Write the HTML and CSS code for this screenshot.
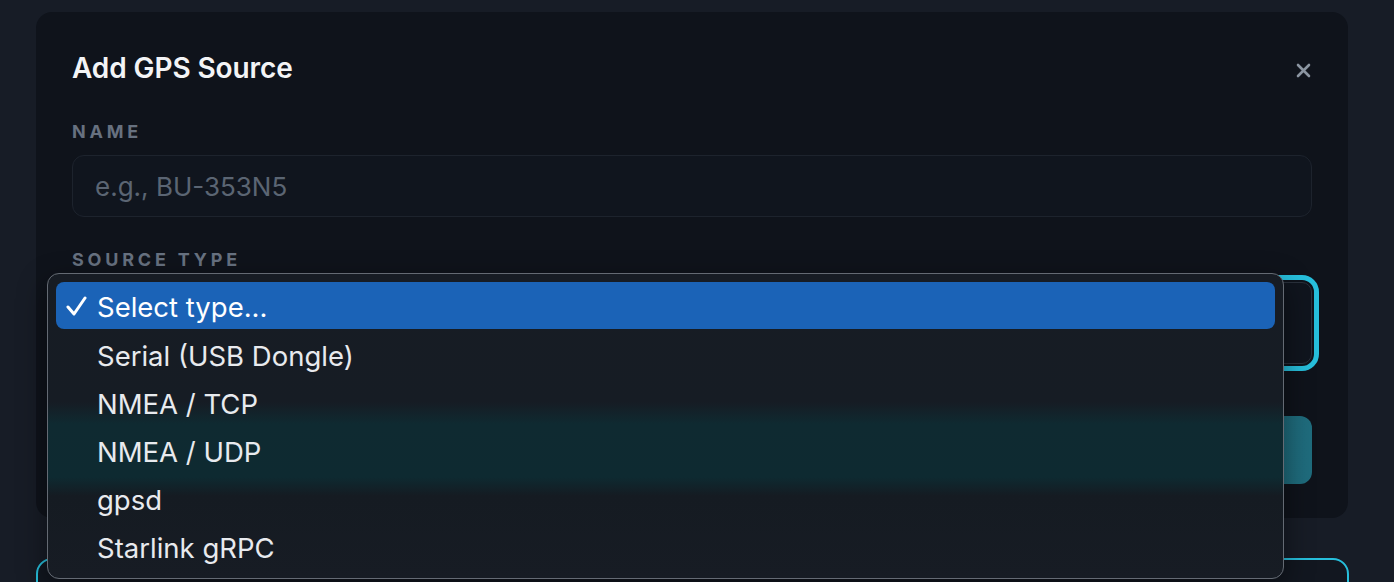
FILE: index.html
```html
<!DOCTYPE html>
<html lang="en">
<head>
  <meta charset="UTF-8">
  <meta name="viewport" content="width=device-width, initial-scale=1.0">
  <title>Add GPS Source</title>
  <link rel="stylesheet" href="styles.css">
</head>
<body>
  <div class="page">
    <div class="modal">
      <div class="modal-head">
        <h2>Add GPS Source</h2>
        <button class="close-btn" aria-label="Close">
          <svg width="15" height="15" viewBox="0 0 15 15">
            <path d="M2 2 L13 13 M13 2 L2 13" stroke="#8b95a1" stroke-width="2.6" stroke-linecap="round" fill="none"/>
          </svg>
        </button>
      </div>

      <label class="field-label" for="name">Name</label>
      <input type="text" id="name" placeholder="e.g., BU-353N5">

      <label class="field-label source-label">Source type</label>
      <div class="select-box"></div>

      <button class="submit-btn" aria-label="Add source"></button>
    </div>

    <div class="next-card"></div>

    <!-- native select popup, open over the form -->
    <ul class="dropdown">
      <li class="option selected">
        <svg class="check" width="21" height="20" viewBox="0 0 21 20">
          <polyline points="2,11 8,18 19,2" stroke="#ffffff" stroke-width="3" fill="none" stroke-linecap="round" stroke-linejoin="round"/>
        </svg>
        Select type...
      </li>
      <li class="option">Serial (USB Dongle)</li>
      <li class="option">NMEA / TCP</li>
      <li class="option">NMEA / UDP</li>
      <li class="option">gpsd</li>
      <li class="option">Starlink gRPC</li>
    </ul>
  </div>
</body>
</html>
```

FILE: styles.css
```css
* {
  box-sizing: border-box;
  margin: 0;
  padding: 0;
  font-family: 'Inter', 'Noto Sans', sans-serif;
}

body {
  background: #171c26;
  height: 582px;
  overflow: hidden;
}

.page {
  position: relative;
  padding: 12px 46px 0 36px;
}

.modal {
  background: #0f131b;
  border-radius: 16px;
  padding: 36px 36px 34px;
}

.modal-head {
  display: flex;
  justify-content: space-between;
  align-items: center;
  height: 40px;
}

h2 {
  font-size: 28px;
  font-weight: 600;
  color: #f3f4f6;
  letter-spacing: -0.1px;
}

.close-btn {
  background: none;
  border: none;
  width: 15px;
  height: 15px;
  display: flex;
  margin-top: 5px;
  margin-right: 1px;
}

.field-label {
  display: block;
  margin-top: 32px;
  margin-bottom: 11px;
  font-size: 18px;
  line-height: 24px;
  font-weight: 700;
  letter-spacing: 3.8px;
  text-transform: uppercase;
  color: #677180;
}

.source-label {
  margin-top: 31px;
  margin-bottom: 10px;
}

input[type="text"] {
  display: block;
  width: 100%;
  height: 62px;
  padding: 0 22px;
  background: #10151e;
  border: 1px solid #1d232d;
  border-radius: 12px;
  font-size: 26px;
  color: #e5e7eb;
  outline: none;
}

input::placeholder {
  color: #5b6573;
}

.select-box {
  height: 82px;
  background: #10151e;
  border: 1px solid #2a313c;
  border-radius: 10px;
  outline: 5px solid #27bfdc;
  outline-offset: 2px;
}

.submit-btn {
  display: block;
  width: 100%;
  height: 68px;
  margin-top: 52px;
  border: none;
  border-radius: 12px;
  background: linear-gradient(to right, #135a6a, #1f6c7d);
}

.next-card {
  margin-top: 40px;
  height: 80px;
  background: #121720;
  border: 2px solid #27bfdc;
  border-radius: 16px;
  margin-right: -1px;
}

.dropdown {
  position: absolute;
  left: 47px;
  top: 273px;
  width: 1237px;
  height: 306px;
  list-style: none;
  padding: 8px;
  background: linear-gradient(to bottom,
    #171c24 0px, #161c24 128px, #0f2a31 150px, #0e2a31 203px,
    #151b22 222px, #171c24 100%);
  border: 1px solid #646a73;
  border-radius: 12px;
  box-shadow: 0 10px 30px rgba(0, 0, 0, 0.45);
}

.option {
  position: relative;
  height: 48px;
  line-height: 52px;
  padding-left: 41px;
  font-size: 27.5px;
  color: #e8eaee;
}

.option.selected {
  background: #1b63b7;
  border-radius: 8px;
  color: #ffffff;
  height: 47px;
  margin-bottom: 1px;
  line-height: 51px;
}

.check {
  position: absolute;
  left: 10px;
  top: 14px;
}
```
